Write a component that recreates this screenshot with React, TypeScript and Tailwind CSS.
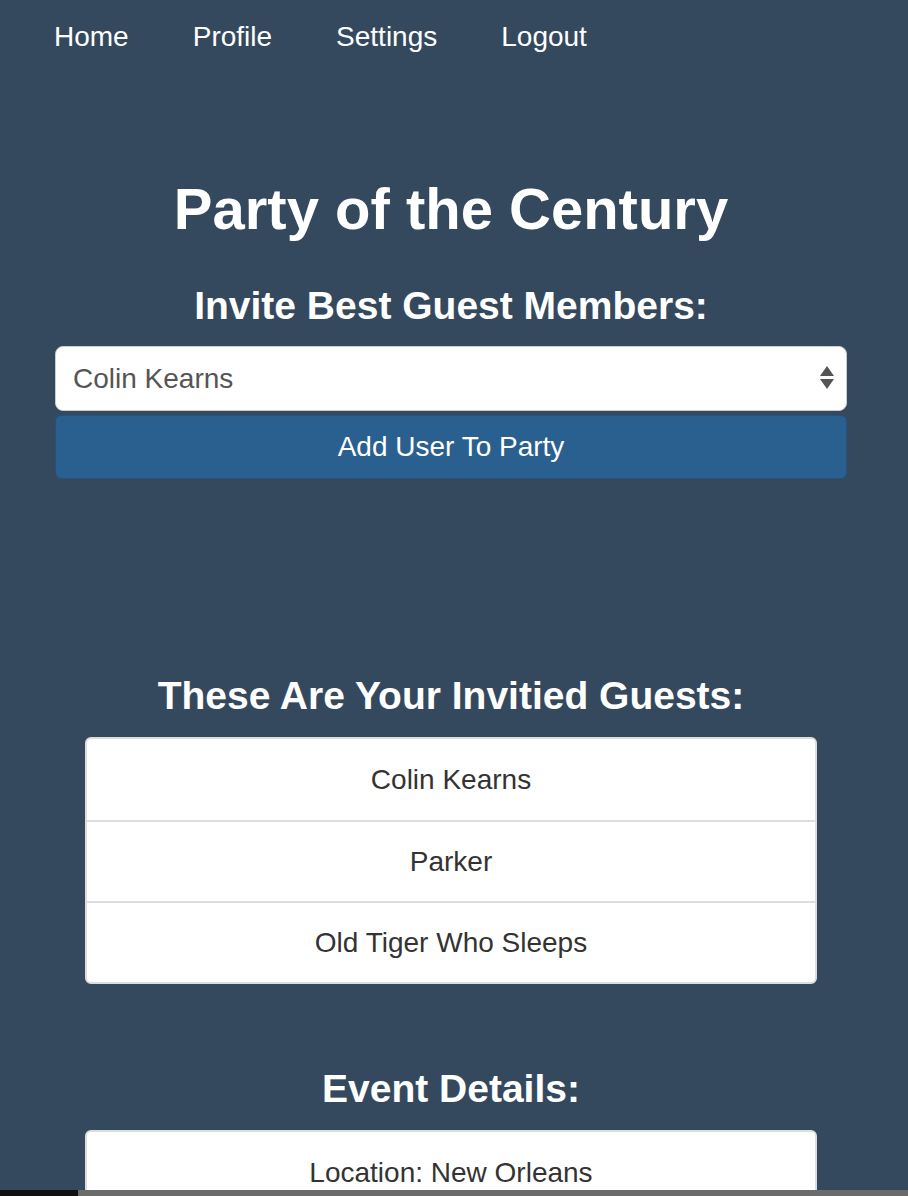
const guests = ["Colin Kearns", "Parker", "Old Tiger Who Sleeps"];

const App = () => {
  return (
    <div
      className="h-[1196px] overflow-hidden bg-[#34495e] text-white flex flex-col"
      style={{ fontFamily: '"Liberation Sans", Arial, sans-serif' }}
    >
      <nav className="flex gap-[64px] pl-[54px] pt-[16px] h-[80px] shrink-0 text-[28px]">
        <a>Home</a>
        <a>Profile</a>
        <a>Settings</a>
        <a>Logout</a>
      </nav>

      <div className="flex-1 min-h-0 overflow-hidden pl-[55px] pr-[61px]">
        <h1 className="text-center text-[58px] font-bold mt-[100px] leading-none">
          Party of the Century
        </h1>
        <h2 className="text-center text-[39px] font-bold mt-[48px] leading-none">
          Invite Best Guest Members:
        </h2>

        <div className="mt-[21px] relative h-[65px] bg-white rounded-[8px] border border-[#ccc] flex items-center pl-[17px] text-[28px] text-[#555]">
          Colin Kearns
          <div className="absolute right-[12px] top-[19px] flex flex-col gap-[3px]">
            <div className="w-0 h-0 border-l-[7px] border-r-[7px] border-b-[10px] border-l-transparent border-r-transparent border-b-[#555]" />
            <div className="w-0 h-0 border-l-[7px] border-r-[7px] border-t-[10px] border-l-transparent border-r-transparent border-t-[#555]" />
          </div>
        </div>
        <button className="mt-[4px] w-full h-[64px] bg-[#2a6090] rounded-[6px] border border-[#24527c] text-[28px] text-white">
          Add User To Party
        </button>

        <h2 className="text-center text-[39px] font-bold mt-[197px] leading-none">
          These Are Your Invitied Guests:
        </h2>
        <ul className="mt-[22px] mx-[30px] bg-white rounded-[6px] border-2 border-[#ddd] text-[#333] text-[28px]">
          {guests.map((g, i) => (
            <li
              key={g}
              className={`h-[81px] flex items-center justify-center ${i > 0 ? "border-t-2 border-[#ddd]" : ""}`}
            >
              {g}
            </li>
          ))}
        </ul>

        <h2 className="text-center text-[39px] font-bold mt-[85px] leading-none">
          Event Details:
        </h2>
        <ul className="mt-[22px] mx-[30px] bg-white rounded-t-[6px] border-2 border-[#ddd] text-[#333] text-[28px]">
          <li className="h-[81px] flex items-center justify-center">Location: New Orleans</li>
        </ul>
      </div>
      <div className="h-[6px] flex shrink-0">
        <div className="w-[78px] bg-[#111]" />
        <div className="flex-1 bg-[#6b6b6b]" />
      </div>
    </div>
  );
};

export default App;
